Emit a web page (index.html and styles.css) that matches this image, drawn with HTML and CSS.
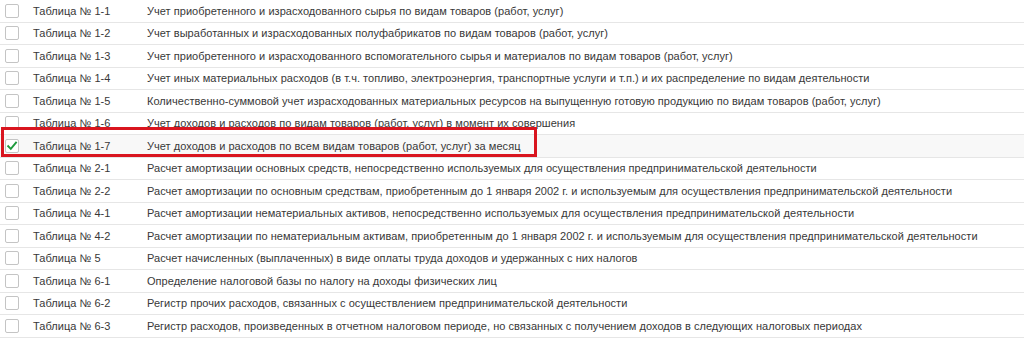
FILE: index.html
```html
<!DOCTYPE html>
<html lang="ru">
<head>
<meta charset="utf-8">
<title>Таблицы</title>
<link rel="stylesheet" href="styles.css">
</head>
<body>
<div class="list">
  <div class="row"><span class="cb"></span><span class="code">Таблица № 1-1</span><span class="desc">Учет приобретенного и израсходованного сырья по видам товаров (работ, услуг)</span></div>
  <div class="row"><span class="cb"></span><span class="code">Таблица № 1-2</span><span class="desc">Учет выработанных и израсходованных полуфабрикатов по видам товаров (работ, услуг)</span></div>
  <div class="row"><span class="cb"></span><span class="code">Таблица № 1-3</span><span class="desc">Учет приобретенного и израсходованного вспомогательного сырья и материалов по видам товаров (работ, услуг)</span></div>
  <div class="row"><span class="cb"></span><span class="code">Таблица № 1-4</span><span class="desc">Учет иных материальных расходов (в т.ч. топливо, электроэнергия, транспортные услуги и т.п.) и их распределение по видам деятельности</span></div>
  <div class="row"><span class="cb"></span><span class="code">Таблица № 1-5</span><span class="desc">Количественно-суммовой учет израсходованных материальных ресурсов на выпущенную готовую продукцию по видам товаров (работ, услуг)</span></div>
  <div class="row"><span class="cb"></span><span class="code">Таблица № 1-6</span><span class="desc">Учет доходов и расходов по видам товаров (работ, услуг) в момент их совершения</span></div>
  <div class="row row-checked"><span class="cb cb-checked"><svg viewBox="0 0 12 12" width="12" height="12"><path d="M2.2 6.2 L4.8 8.8 L10 2.6" fill="none" stroke="#1e9a3c" stroke-width="1.9" stroke-linecap="square"/></svg></span><span class="code">Таблица № 1-7</span><span class="desc">Учет доходов и расходов по всем видам товаров (работ, услуг) за месяц</span></div>
  <div class="row"><span class="cb"></span><span class="code">Таблица № 2-1</span><span class="desc">Расчет амортизации основных средств, непосредственно используемых для осуществления предпринимательской деятельности</span></div>
  <div class="row"><span class="cb"></span><span class="code">Таблица № 2-2</span><span class="desc">Расчет амортизации по основным средствам, приобретенным до 1 января 2002 г. и используемым для осуществления предпринимательской деятельности</span></div>
  <div class="row"><span class="cb"></span><span class="code">Таблица № 4-1</span><span class="desc">Расчет амортизации нематериальных активов, непосредственно используемых для осуществления предпринимательской деятельности</span></div>
  <div class="row"><span class="cb"></span><span class="code">Таблица № 4-2</span><span class="desc">Расчет амортизации по нематериальным активам, приобретенным до 1 января 2002 г. и используемым для осуществления предпринимательской деятельности</span></div>
  <div class="row"><span class="cb"></span><span class="code">Таблица № 5</span><span class="desc">Расчет начисленных (выплаченных) в виде оплаты труда доходов и удержанных с них налогов</span></div>
  <div class="row"><span class="cb"></span><span class="code">Таблица № 6-1</span><span class="desc">Определение налоговой базы по налогу на доходы физических лиц</span></div>
  <div class="row"><span class="cb"></span><span class="code">Таблица № 6-2</span><span class="desc">Регистр прочих расходов, связанных с осуществлением предпринимательской деятельности</span></div>
  <div class="row"><span class="cb"></span><span class="code">Таблица № 6-3</span><span class="desc">Регистр расходов, произведенных в отчетном налоговом периоде, но связанных с получением доходов в следующих налоговых периодах</span></div>
  <div class="highlight"></div>
</div>
</body>
</html>
```
FILE: styles.css
```css
html, body {
  margin: 0;
  padding: 0;
  background: #ffffff;
}
body {
  font-family: "Liberation Sans", Arial, sans-serif;
  font-size: 11px;
  letter-spacing: 0.04px;
  color: #383838;
  overflow: hidden;
}
.list {
  position: relative;
  width: 1024px;
}
.row {
  display: flex;
  align-items: center;
  height: 22.5px;
  box-sizing: border-box;
  border-bottom: 1px solid #e6e6e6;
  white-space: nowrap;
}
.row-checked {
  background: #f8f8f8;
}
.cb {
  flex: none;
  width: 12px;
  height: 12px;
  margin-left: 5px;
  border: 1px solid #c4c4c4;
  border-radius: 2px;
  background: #fff;
  box-sizing: content-box;
  display: flex;
}
.cb svg {
  display: block;
}
.code {
  flex: none;
  width: 114px;
  margin-left: 14px;
}
.desc {
  flex: none;
}
.highlight {
  position: absolute;
  left: 1px;
  top: 127px;
  width: 536px;
  height: 30px;
  box-sizing: border-box;
  border: 3px solid #d9151f;
}
```
